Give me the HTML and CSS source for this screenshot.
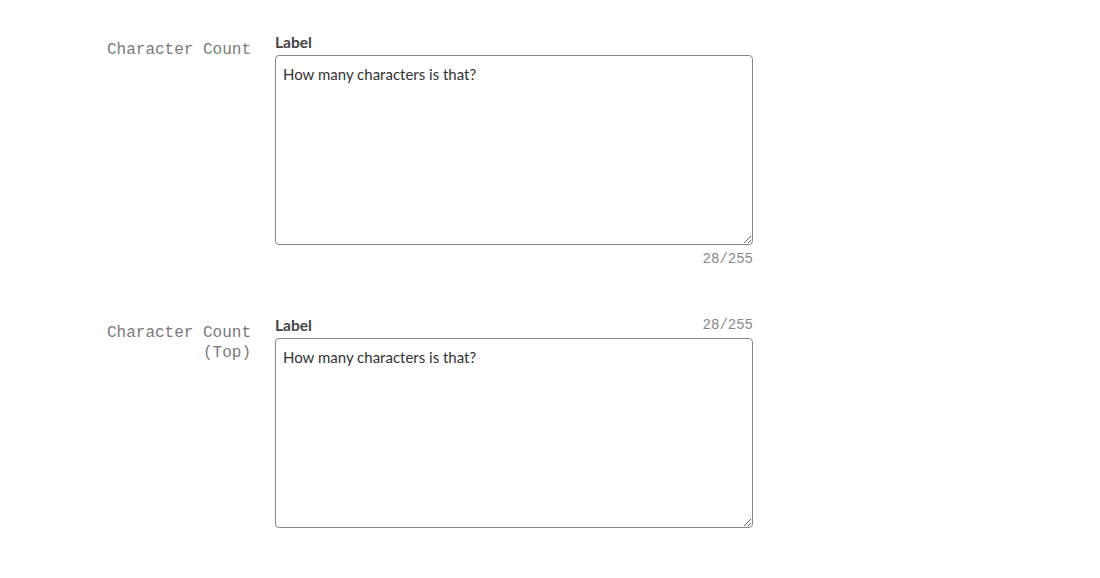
FILE: index.html
```html
<!DOCTYPE html>
<html>
<head>
<meta charset="utf-8">
<link rel="stylesheet" href="styles.css">
</head>
<body>
<div class="page">
  <div class="row">
    <div class="row-label">Character Count</div>
    <div class="field">
      <div class="field-head"><span class="field-label">Label</span></div>
      <textarea class="field-input" readonly>How many characters is that?</textarea>
      <div class="field-foot"><span class="counter">28/255</span></div>
    </div>
  </div>
  <div class="row">
    <div class="row-label">Character Count<br>(Top)</div>
    <div class="field">
      <div class="field-head"><span class="field-label">Label</span><span class="counter">28/255</span></div>
      <textarea class="field-input" readonly>How many characters is that?</textarea>
    </div>
  </div>
</div>
</body>
</html>
```

FILE: styles.css
```css
html, body {
  margin: 0;
  background: #fff;
}
.page {
  padding-top: 32px;
  display: flex;
  flex-direction: column;
  gap: 46px;
}
.row {
  display: grid;
  grid-template-columns: 251px 478px;
  column-gap: 24px;
  align-items: start;
}
.row-label {
  text-align: right;
  font-family: "Liberation Mono", monospace;
  font-size: 16px;
  line-height: 20px;
  color: #7a7a7a;
  padding-top: 8px;
}
.field {
  display: flex;
  flex-direction: column;
}
.field-head {
  display: flex;
  justify-content: space-between;
  align-items: flex-end;
  height: 23px;
  padding-bottom: 3px;
  box-sizing: border-box;
}
.field-label {
  font-family: "Lato", sans-serif;
  font-weight: bold;
  font-size: 15.5px;
  line-height: 20px;
  color: #444;
}
.counter {
  font-family: "Liberation Mono", monospace;
  font-size: 14px;
  line-height: 20px;
  color: #888;
}
.field-input {
  box-sizing: border-box;
  width: 478px;
  height: 190px;
  margin: 0;
  border: 1px solid #888;
  border-radius: 4px;
  padding: 8px 7px;
  font-family: "Lato", sans-serif;
  font-size: 15px;
  line-height: 20px;
  color: #333;
  resize: vertical;
  outline: none;
}
.field-foot {
  display: flex;
  justify-content: flex-end;
  height: 24px;
  align-items: flex-end;
}
```
